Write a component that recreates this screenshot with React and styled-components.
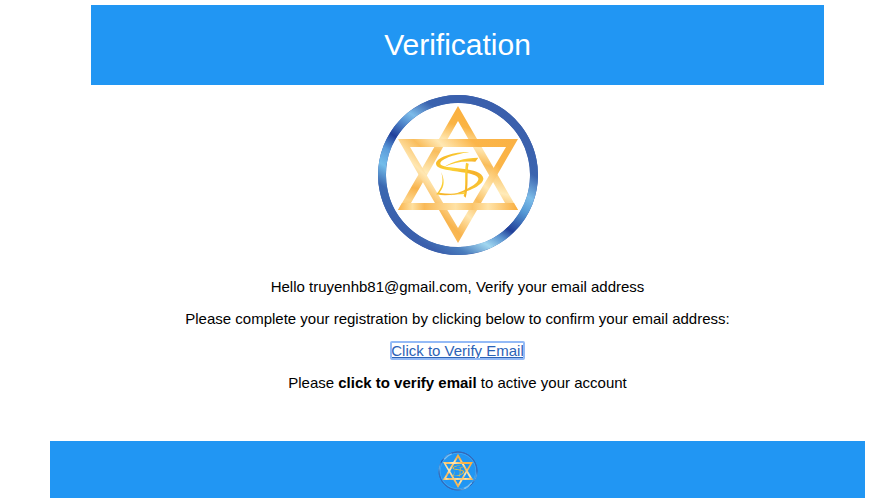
import React from "react";
import styled, { createGlobalStyle } from "styled-components";

const GlobalStyle = createGlobalStyle`
  body {
    margin: 0;
    background: #fff;
    color: #000;
    font-family: "Liberation Sans", Arial, sans-serif;
    font-size: 15px;
    line-height: 17px;
  }
`;

const Page = styled.div`
  padding: 5px 25px 0 50px;
  text-align: center;
`;

const Header = styled.header`
  width: 90%;
  margin: 0 auto;
  padding: 22px 0;
  box-sizing: border-box;
  background: #2196f3;
`;

const Title = styled.h1`
  margin: 0;
  color: #fff;
  font-size: 30px;
  line-height: 36px;
  font-weight: 400;
`;

const Content = styled.main`
  display: flex;
  flex-direction: column;
  align-items: center;
  gap: 15px;
  padding: 10px 0 50px;
`;

const Mark = styled.svg`
  display: block;
  width: ${(p) => p.$size}px;
  height: ${(p) => p.$size}px;
  margin: 0 auto ${(p) => p.$gap || 0}px;
`;

const Text = styled.p`
  margin: 0;
`;

const VerifyLink = styled.a`
  color: #2c62b6;
  border-radius: 1px;
  outline: 2px solid #94baf6;
  outline-offset: -1px;
`;

const Footer = styled.footer`
  padding: 10px 0 7px;
  background: #2196f3;
`;

function Logo({ id, size, gap, faint }) {
  const url = (name) => `url(#${id}-${name})`;
  const ring = faint ? 4 : 8;
  return (
    <Mark $size={size} $gap={gap} viewBox="0 0 160 160" role="img" aria-label="Star logo">
      <defs>
        <linearGradient id={`${id}-left`} gradientUnits="userSpaceOnUse" x1="120" y1="15" x2="40" y2="145">
          <stop offset="0" stopColor="#3a5fac" />
          <stop offset=".2" stopColor="#3a62ae" />
          <stop offset=".32" stopColor="#7dbce9" />
          <stop offset=".38" stopColor="#5b96d4" />
          <stop offset=".5" stopColor="#203f9b" />
          <stop offset=".6" stopColor="#5c9ddb" />
          <stop offset=".7" stopColor="#73bdea" />
          <stop offset=".82" stopColor="#3b68b1" />
          <stop offset="1" stopColor="#3a5fac" />
        </linearGradient>
        <linearGradient id={`${id}-right`} gradientUnits="userSpaceOnUse" x1="120" y1="15" x2="40" y2="145">
          <stop offset="0" stopColor="#3a5fac" />
          <stop offset=".24" stopColor="#3b64af" />
          <stop offset=".38" stopColor="#7cbce8" />
          <stop offset=".48" stopColor="#5599d5" />
          <stop offset=".63" stopColor="#213f98" />
          <stop offset=".7" stopColor="#5a93cf" />
          <stop offset=".79" stopColor="#a1d7f0" />
          <stop offset=".91" stopColor="#4a7dbd" />
          <stop offset="1" stopColor="#3a5fac" />
        </linearGradient>
        <linearGradient id={`${id}-up`} gradientUnits="userSpaceOnUse" x1="96" y1="16" x2="62" y2="140">
          <stop offset="0" stopColor="#fbb03e" />
          <stop offset=".14" stopColor="#fab445" />
          <stop offset=".27" stopColor="#ffe6ae" />
          <stop offset=".38" stopColor="#f9bd5b" />
          <stop offset=".56" stopColor="#ffebb9" />
          <stop offset=".7" stopColor="#f8b34c" />
          <stop offset=".8" stopColor="#fdd489" />
          <stop offset="1" stopColor="#f9b249" />
        </linearGradient>
        <linearGradient id={`${id}-down`} gradientUnits="userSpaceOnUse" x1="130" y1="34" x2="38" y2="130">
          <stop offset="0" stopColor="#fab144" />
          <stop offset=".25" stopColor="#fbb548" />
          <stop offset=".43" stopColor="#ffe8b3" />
          <stop offset=".55" stopColor="#f9bd5c" />
          <stop offset=".68" stopColor="#ffe7b2" />
          <stop offset=".82" stopColor="#f8b44e" />
          <stop offset="1" stopColor="#fbc56c" />
        </linearGradient>
        <linearGradient id={`${id}-base`} gradientUnits="userSpaceOnUse" x1="20" y1="112" x2="140" y2="112">
          <stop offset="0" stopColor="#f9b249" />
          <stop offset=".12" stopColor="#fee0a0" />
          <stop offset=".22" stopColor="#f9b957" />
          <stop offset=".48" stopColor="#ffe2a5" />
          <stop offset=".62" stopColor="#fbc56b" />
          <stop offset=".75" stopColor="#ffe4aa" />
          <stop offset="1" stopColor="#f9ad3d" />
        </linearGradient>
        <linearGradient id={`${id}-sign`} x1="0" y1="0" x2="1" y2="1">
          <stop offset="0" stopColor="#f5ac25" />
          <stop offset=".35" stopColor="#fbd335" />
          <stop offset=".65" stopColor="#f6b02a" />
          <stop offset="1" stopColor="#fbd83c" />
        </linearGradient>
      </defs>
      <g fill="none" strokeWidth={ring} opacity={faint ? 0.85 : 1}>
        <circle cx="80" cy="80" r="76" stroke="#3a5fac" />
        <path d="M120 15.4A75.9 75.9 0 0 0 40 144.6" stroke={url("left")} />
        <path d="M120 15.4A75.9 75.9 0 0 1 40 144.6" stroke={url("right")} />
      </g>
      {faint && (
        <g fill="none" stroke="#9ad4f8" strokeWidth="5" opacity=".75">
          <path d="M25 33Q38 17 55 11M135 127Q122 143 105 149" />
          <circle cx="80" cy="80" r="71" strokeWidth="2" opacity=".6" />
        </g>
      )}
      <path fillRule="evenodd" fill={url("up")} d="M80 11L140 115H20ZM80 26L33 108H127Z" />
      <path fillRule="evenodd" fill={url("down")} d="M20 44H140L80 148ZM32 52L80 133L128 52Z" />
      <path fill={url("base")} d="M24 108H136L140 115H20Z" />
      <g transform="translate(52 50) scale(.33333)" fill={url("sign")}>
        <path d="M118 21C78 20 22 34 18 55C17 69 38 73 69 78C103 83 141 86 145 100C148 117 105 137 62 151C105 146 162 122 160 100C157 82 130 75 97 71C63 67 31 65 31 56C31 40 83 27 118 21Z" />
        <path d="M42 66C67 49 102 39 145 38L136 50C99 47 68 52 42 66Z" />
        <path d="M108 53L116 56C109 86 117 124 107 158L101 153C110 125 102 88 108 53Z" />
        <path d="M33 81C44 103 45 124 28 143C55 148 79 147 105 141L107 147C79 147 48 154 18 148C37 129 42 106 33 81Z" />
      </g>
    </Mark>
  );
}

export default function App() {
  return (
    <>
      <GlobalStyle />
      <Page>
        <Header>
          <Title>Verification</Title>
        </Header>
        <Content>
          <Logo id="main" size={160} gap={8} />
          <Text>Hello truyenhb81@gmail.com, Verify your email address</Text>
          <Text>Please complete your registration by clicking below to confirm your email address:</Text>
          <Text>
            <VerifyLink href="#verify">Click to Verify Email</VerifyLink>
          </Text>
          <Text>
            Please <b>click to verify email</b> to active your account
          </Text>
        </Content>
        <Footer>
          <Logo id="footer" size={40} faint />
        </Footer>
      </Page>
    </>
  );
}
